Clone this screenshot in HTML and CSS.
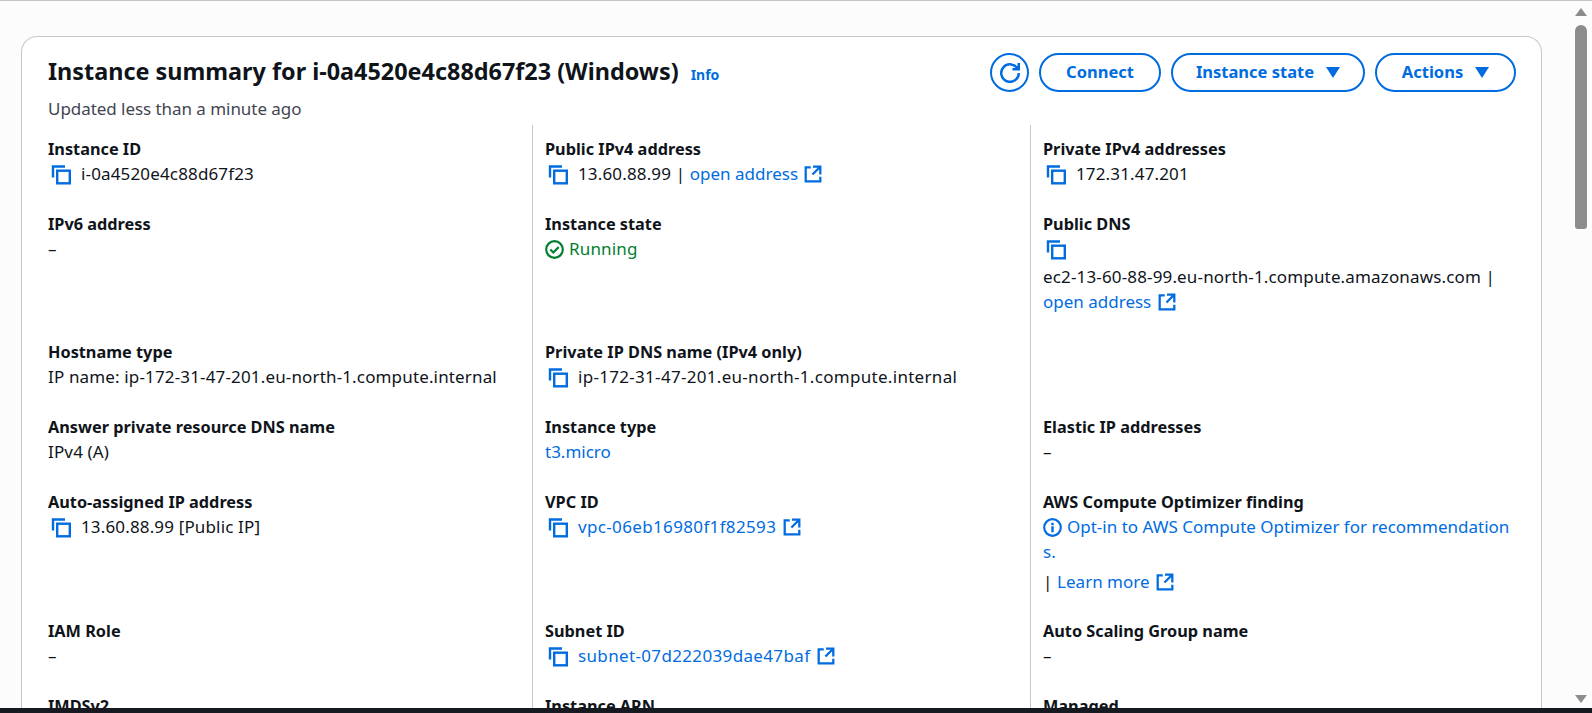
FILE: index.html
```html
<!DOCTYPE html>
<html lang="en">
<head>
    <meta charset="UTF-8">
    <title>Instance summary</title>
    <link rel="stylesheet" href="styles.css">
</head>
<body>
    <svg class="sprite" xmlns="http://www.w3.org/2000/svg">
        <symbol id="copy" viewBox="0 0 20 20"><path d="M2 13V2h12" fill="none" stroke="currentColor" stroke-width="2.4"/><rect x="6.2" y="6.2" width="12.6" height="12.6" fill="none" stroke="currentColor" stroke-width="2.4"/></symbol>
        <symbol id="ext" viewBox="0 0 16 16"><path d="M14.5 8.5V1.5H8M14.2 1.8 7.5 8.5M6 2H1.5v12.5h13V10.5" fill="none" stroke="currentColor" stroke-width="2"/></symbol>
        <symbol id="ok" viewBox="0 0 16 16"><circle cx="8" cy="8" r="7" fill="none" stroke="currentColor" stroke-width="1.8"/><path d="m4.5 8 2.5 2.5 4.5-4.5" fill="none" stroke="currentColor" stroke-width="1.8"/></symbol>
        <symbol id="info" viewBox="0 0 16 16"><circle cx="8" cy="8" r="7" fill="none" stroke="currentColor" stroke-width="1.8"/><path d="M8 7v5M8 4v2" fill="none" stroke="currentColor" stroke-width="2"/></symbol>
        <symbol id="refresh" viewBox="0 0 16 16"><path d="M10 5h5V0M15 8a7 7 0 1 1-.7-3" fill="none" stroke="currentColor" stroke-width="2"/></symbol>
        <symbol id="caret" viewBox="0 0 14 12"><path d="M0 1h14L7 12z" fill="currentColor"/></symbol>
    </svg>

    <div class="page">
        <div class="scroll-area">
            <div class="card">
                <div class="card-head">
                    <div class="card-title">
                        <h1>Instance summary for i-0a4520e4c88d67f23 (Windows) <a class="info-link" href="#">Info</a></h1>
                        <p class="updated">Updated less than a minute ago</p>
                    </div>
                    <div class="actions">
                        <button class="btn btn-icon"><svg class="ico-refresh"><use href="#refresh"/></svg></button>
                        <button class="btn btn-connect">Connect</button>
                        <button class="btn btn-state">Instance state <svg class="ico-caret"><use href="#caret"/></svg></button>
                        <button class="btn btn-actions">Actions <svg class="ico-caret"><use href="#caret"/></svg></button>
                    </div>
                </div>

                <div class="details">
                    <div class="cell">
                        <div class="label">Instance ID</div>
                        <div class="value"><svg class="ico-copy"><use href="#copy"/></svg>i-0a4520e4c88d67f23</div>
                    </div>
                    <div class="cell">
                        <div class="label">Public IPv4 address</div>
                        <div class="value"><svg class="ico-copy"><use href="#copy"/></svg>13.60.88.99 | <a href="#">open address <svg class="ico-ext"><use href="#ext"/></svg></a></div>
                    </div>
                    <div class="cell">
                        <div class="label">Private IPv4 addresses</div>
                        <div class="value"><svg class="ico-copy"><use href="#copy"/></svg>172.31.47.201</div>
                    </div>

                    <div class="cell">
                        <div class="label">IPv6 address</div>
                        <div class="value">–</div>
                    </div>
                    <div class="cell">
                        <div class="label">Instance state</div>
                        <div class="value running"><svg class="ico-ok"><use href="#ok"/></svg>Running</div>
                    </div>
                    <div class="cell">
                        <div class="label">Public DNS</div>
                        <div class="value value-tall"><svg class="ico-copy"><use href="#copy"/></svg></div>
                        <div class="value">ec2-13-60-88-99.eu-north-1.compute.amazonaws.com |</div>
                        <div class="value"><a href="#">open address <svg class="ico-ext"><use href="#ext"/></svg></a></div>
                    </div>

                    <div class="cell">
                        <div class="label">Hostname type</div>
                        <div class="value">IP name: ip-172-31-47-201.eu-north-1.compute.internal</div>
                    </div>
                    <div class="cell">
                        <div class="label">Private IP DNS name (IPv4 only)</div>
                        <div class="value value-wide"><svg class="ico-copy"><use href="#copy"/></svg>ip-172-31-47-201.eu-north-1.compute.internal</div>
                    </div>
                    <div class="cell"></div>

                    <div class="cell">
                        <div class="label">Answer private resource DNS name</div>
                        <div class="value">IPv4 (A)</div>
                    </div>
                    <div class="cell">
                        <div class="label">Instance type</div>
                        <div class="value"><a href="#">t3.micro</a></div>
                    </div>
                    <div class="cell">
                        <div class="label">Elastic IP addresses</div>
                        <div class="value">–</div>
                    </div>

                    <div class="cell">
                        <div class="label">Auto-assigned IP address</div>
                        <div class="value"><svg class="ico-copy"><use href="#copy"/></svg>13.60.88.99 [Public IP]</div>
                    </div>
                    <div class="cell">
                        <div class="label">VPC ID</div>
                        <div class="value"><svg class="ico-copy"><use href="#copy"/></svg><a class="id-link" href="#">vpc-06eb16980f1f82593 <svg class="ico-ext"><use href="#ext"/></svg></a></div>
                    </div>
                    <div class="cell">
                        <div class="label">AWS Compute Optimizer finding</div>
                        <div class="value"><a href="#"><svg class="ico-info"><use href="#info"/></svg>Opt-in to AWS Compute Optimizer for recommendation<br>s.</a></div>
                        <div class="value value-more">| <a href="#">Learn more <svg class="ico-ext"><use href="#ext"/></svg></a></div>
                    </div>

                    <div class="cell">
                        <div class="label">IAM Role</div>
                        <div class="value">–</div>
                    </div>
                    <div class="cell">
                        <div class="label">Subnet ID</div>
                        <div class="value"><svg class="ico-copy"><use href="#copy"/></svg><a class="id-link" href="#">subnet-07d222039dae47baf <svg class="ico-ext"><use href="#ext"/></svg></a></div>
                    </div>
                    <div class="cell">
                        <div class="label">Auto Scaling Group name</div>
                        <div class="value">–</div>
                    </div>

                    <div class="cell">
                        <div class="label">IMDSv2</div>
                    </div>
                    <div class="cell">
                        <div class="label">Instance ARN</div>
                    </div>
                    <div class="cell">
                        <div class="label">Managed</div>
                    </div>
                </div>
            </div>
            <div class="scrollbar">
                <span class="arrow-up"></span>
                <span class="thumb"></span>
                <span class="arrow-down"></span>
            </div>
        </div>
        <div class="bottom-bar"></div>
    </div>
</body>
</html>
```

FILE: styles.css
```css
* {
    box-sizing: border-box;
}
html, body {
    margin: 0;
    height: 100%;
    overflow: hidden;
}
body {
    font-family: 'Noto Sans', sans-serif;
    font-size: 17px;
    line-height: 25px;
    color: #0f141a;
    background-color: #fcfcfd;
}
a {
    color: #006ce0;
    text-decoration: none;
}
.sprite {
    display: none;
}
.page {
    height: 713px;
    display: flex;
    flex-direction: column;
    border-top: 1px solid #c6c6cd;
}
.scroll-area {
    flex: 1;
    min-height: 0;
    display: flex;
}
.card {
    flex: 1;
    min-width: 0;
    margin: 35px 0 0 21px;
    padding-left: 1px;
    background-color: #fff;
    border: 1px solid #c6c6cd;
    border-bottom: none;
    border-radius: 16px 16px 0 0;
    overflow: hidden;
}
.card-head {
    height: 88px;
    padding: 16px 25px 0 25px;
    display: flex;
    justify-content: space-between;
}
h1 {
    margin: 0;
    font-size: 23.4px;
    line-height: 36px;
    font-weight: 700;
}
.info-link {
    font-size: 14px;
    font-weight: 700;
    margin-left: 6px;
}
.updated {
    margin: 3px 0 0;
    font-size: 17px;
    letter-spacing: -0.05px;
    color: #424650;
}
.actions {
    display: flex;
    gap: 10px;
}
.btn {
    height: 39px;
    border: 2px solid #006ce0;
    border-radius: 20px;
    background-color: #fff;
    color: #006ce0;
    font-family: inherit;
    font-size: 16.5px;
    font-weight: 700;
    display: flex;
    align-items: center;
    justify-content: center;
    padding: 0 0 2px;
}
.btn-icon {
    width: 39px;
    padding: 0;
}
.btn-connect {
    width: 122px;
}
.btn-state {
    width: 194px;
    gap: 12px;
}
.btn-actions {
    width: 141px;
    gap: 12px;
}
.ico-refresh {
    width: 20px;
    height: 20px;
}
.ico-caret {
    width: 14px;
    height: 12px;
}
.details {
    display: grid;
    grid-template-columns: 509px 498px 1fr;
    grid-auto-rows: min-content;
}
.cell {
    padding: 12px 12px 14px 12px;
    border-left: 1px solid #c6c6cd;
}
.cell:nth-child(3n+1) {
    padding-left: 25px;
    border-left: none;
}
.label {
    font-size: 16.3px;
    font-weight: 700;
    margin-bottom: -1px;
}
.value {
    letter-spacing: 0.15px;
}
.value a {
    letter-spacing: 0;
}
.value .id-link {
    letter-spacing: 0.35px;
}
.value-wide {
    letter-spacing: 0.3px;
}
.value-tall {
    height: 28px;
}
.value-more {
    margin: 5px 0 -1px;
}
.ico-copy {
    width: 20px;
    height: 21px;
    margin: 0 10px 0 3px;
    color: #006ce0;
    vertical-align: -5px;
}
.ico-ext {
    width: 18px;
    height: 18px;
    margin-left: 2px;
    vertical-align: -3px;
}
.ico-ok {
    width: 19px;
    height: 19px;
    margin-right: 5px;
    vertical-align: -4px;
}
.ico-info {
    width: 19px;
    height: 19px;
    margin-right: 5px;
    vertical-align: -4px;
}
.running {
    color: #00802f;
}
.scrollbar {
    width: 50px;
    position: relative;
}
.thumb {
    position: absolute;
    right: 5px;
    top: 24px;
    width: 12px;
    height: 204px;
    border-radius: 6px 6px 3px 3px;
    background-color: #8c8c8c;
}
.arrow-up, .arrow-down {
    position: absolute;
    right: 5px;
    width: 0;
    height: 0;
    border-left: 6px solid transparent;
    border-right: 6px solid transparent;
}
.arrow-up {
    top: 7px;
    border-bottom: 8px solid #8c8c8c;
}
.arrow-down {
    top: 694px;
    border-top: 8px solid #8c8c8c;
}
.bottom-bar {
    height: 5px;
    flex: none;
    background-color: #16191f;
}
```
